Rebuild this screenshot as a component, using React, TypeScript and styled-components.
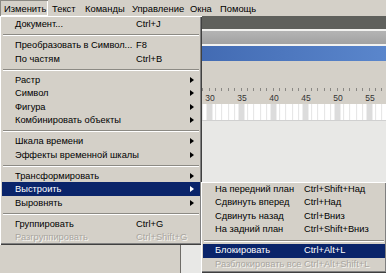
import React from "react";
import styled, { createGlobalStyle, css } from "styled-components";

const Global = createGlobalStyle`
  html, body { margin: 0; padding: 0; background: #d4d0c8; }
  body { width: 386px; height: 273px; overflow: hidden; }
  #root { width: 386px; height: 273px; }
`;

const FONT = `"Liberation Sans", Arial, sans-serif`;

const Frame = styled.div`
  position: relative;
  width: 386px;
  height: 273px;
  overflow: hidden;
  background: #d4d0c8;
  font-family: ${FONT};
  font-size: 9.3px;
  color: #000;
  display: flex;
  flex-direction: column;
`;

const MenuBar = styled.div`
  height: 16px;
  display: flex;
  align-items: stretch;
  background: #d4d0c8;
  font-size: 9.4px;
`;

const BarItem = styled.div<{ $open?: boolean; $w: number }>`
  display: flex;
  align-items: center;
  width: ${(p) => p.$w}px;
  padding-left: 4px;
  box-sizing: border-box;
  white-space: nowrap;
  ${(p) =>
    p.$open &&
    css`
      box-shadow: inset 1px 1px 0 #8c8a84, inset -1px -1px 0 #ffffff;
    `}
`;

const Body = styled.div`
  flex: 1;
  display: flex;
`;

const LayerPane = styled.div`
  width: 202px;
  background: #d4d0c8;
  border-right: 1px solid #6e6c68;
`;

const TimePane = styled.div`
  flex: 1;
  display: flex;
  flex-direction: column;
  background: #e8e8e6;
`;

const Band = styled.div<{ $h: number; $bg: string }>`
  height: ${(p) => p.$h}px;
  background: ${(p) => p.$bg};
`;

const Ruler = styled.div`
  height: 17px;
  display: flex;
  padding-left: 12.7px;
  background-color: #d4d0c8;
  background-image: repeating-linear-gradient(
    to right,
    #8a8884 0,
    #8a8884 1px,
    transparent 1px,
    transparent 6.4px
  );
  background-size: 100% 3px;
  background-repeat: no-repeat;
  background-position: 2.1px 1px;
  font-size: 8.5px;
  color: #333;
`;

const RulerMark = styled.div`
  width: 32px;
  flex: none;
  display: flex;
  justify-content: center;
  align-items: center;
  padding-top: 4px;
`;

const Frames = styled.div`
  height: 16px;
  background-color: #ffffff;
  background-image: repeating-linear-gradient(
      to right,
      #dcdcdc 0,
      #dcdcdc 6.4px,
      transparent 6.4px,
      transparent 32px
    ),
    repeating-linear-gradient(
      to right,
      #e4e4e4 0,
      #e4e4e4 1px,
      transparent 1px,
      transparent 6.4px
    );
  background-position: 25.5px 0, 2.1px 0;
  border-bottom: 1px solid #d0d0d0;
`;

const Menu = styled.div<{ $left: number; $top: number; $w: number }>`
  position: absolute;
  left: ${(p) => p.$left}px;
  top: ${(p) => p.$top}px;
  width: ${(p) => p.$w}px;
  padding: 1.25px 2px;
  box-sizing: border-box;
  background: #d4d0c8;
  box-shadow: inset 1px 1px 0 #ffffff, inset -1px -1px 0 #404040,
    inset -2px -2px 0 #808080;
  display: flex;
  flex-direction: column;
`;

const Row = styled.div<{ $hot?: boolean; $off?: boolean; $cols: string; $padL: number }>`
  height: 13.5px;
  display: grid;
  grid-template-columns: ${(p) => p.$cols};
  align-items: center;
  padding-left: ${(p) => p.$padL}px;
  white-space: nowrap;
  color: #000;
  ${(p) =>
    p.$hot &&
    css`
      background: #0a246a;
      color: #fff;
    `}
  ${(p) =>
    p.$off &&
    css`
      color: #a9a6a0;
      text-shadow: 1px 1px 0 #f6f5f2;
    `}
`;

const Label = styled.span`
  overflow: visible;
`;

const Arrow = styled.span<{ $hot?: boolean }>`
  width: 0;
  height: 0;
  border-top: 3.5px solid transparent;
  border-bottom: 3.5px solid transparent;
  border-left: 4px solid ${(p) => (p.$hot ? "#fff" : "#000")};
  justify-self: start;
`;

const Sep = styled.div`
  height: 7.5px;
  display: flex;
  align-items: center;
  padding: 0 1px;
  &::before {
    content: "";
    flex: 1;
    height: 1px;
    background: #8c8a84;
    box-shadow: 0 1px 0 #ffffff;
  }
`;

type Item =
  | { sep: true }
  | { label: string; key?: string; sub?: boolean; hot?: boolean; off?: boolean };

const mainItems: Item[] = [
  { label: "Документ...", key: "Ctrl+J" },
  { sep: true },
  { label: "Преобразовать в Символ...", key: "F8" },
  { label: "По частям", key: "Ctrl+B" },
  { sep: true },
  { label: "Растр", sub: true },
  { label: "Символ", sub: true },
  { label: "Фигура", sub: true },
  { label: "Комбинировать объекты", sub: true },
  { sep: true },
  { label: "Шкала времени", sub: true },
  { label: "Эффекты временной шкалы", sub: true },
  { sep: true },
  { label: "Трансформировать", sub: true },
  { label: "Выстроить", sub: true, hot: true },
  { label: "Выровнять", sub: true },
  { sep: true },
  { label: "Группировать", key: "Ctrl+G" },
  { label: "Разгруппировать", key: "Ctrl+Shift+G", off: true },
];

const subItems: Item[] = [
  { label: "На передний план", key: "Ctrl+Shift+Над" },
  { label: "Сдвинуть вперед", key: "Ctrl+Над" },
  { label: "Сдвинуть назад", key: "Ctrl+Вниз" },
  { label: "На задний план", key: "Ctrl+Shift+Вниз" },
  { sep: true },
  { label: "Блокировать", key: "Ctrl+Alt+L", hot: true },
  { label: "Разблокировать все", key: "Ctrl+Alt+Shift+L", off: true },
];

const barItems = [
  { label: "Изменить", w: 48, open: true },
  { label: "Текст", w: 33 },
  { label: "Команды", w: 47 },
  { label: "Управление", w: 58 },
  { label: "Окна", w: 30 },
  { label: "Помощь", w: 50 },
];

function MenuList({ items, cols, padL }: { items: Item[]; cols: string; padL: number }) {
  return (
    <>
      {items.map((it, i) =>
        "sep" in it ? (
          <Sep key={i} />
        ) : (
          <Row key={i} $hot={it.hot} $off={it.off} $cols={cols} $padL={padL}>
            <Label>{it.label}</Label>
            <Label>{it.key ?? ""}</Label>
            {it.sub ? <Arrow $hot={it.hot} /> : <span />}
          </Row>
        )
      )}
    </>
  );
}

export default function App() {
  return (
    <Frame>
      <Global />
      <MenuBar>
        {barItems.map((b) => (
          <BarItem key={b.label} $open={b.open} $w={b.w}>
            {b.label}
          </BarItem>
        ))}
      </MenuBar>
      <Body>
        <LayerPane />
        <TimePane>
          <Band $h={13} $bg="#5f605c" />
          <Band $h={2} $bg="#f2f2f0" />
          <Band $h={13} $bg="linear-gradient(to bottom, #b4b4b4, #a2a2a2)" />
          <Band $h={2} $bg="#f2f2f0" />
          <Band $h={15} $bg="linear-gradient(to right, #4068b0, #5a86cc)" />
          <Band $h={26} $bg="#d4d0c8" />
          <Ruler>
            {["30", "35", "40", "45", "50", "55"].map((n) => (
              <RulerMark key={n}>{n}</RulerMark>
            ))}
          </Ruler>
          <Frames />
        </TimePane>
      </Body>
      <Menu $left={0} $top={16} $w={202}>
        <MenuList items={mainItems} cols="121px 1fr 10px" padL={13} />
      </Menu>
      <Menu $left={201} $top={181.5} $w={186}>
        <MenuList items={subItems} cols="89px 1fr" padL={12} />
      </Menu>
    </Frame>
  );
}
